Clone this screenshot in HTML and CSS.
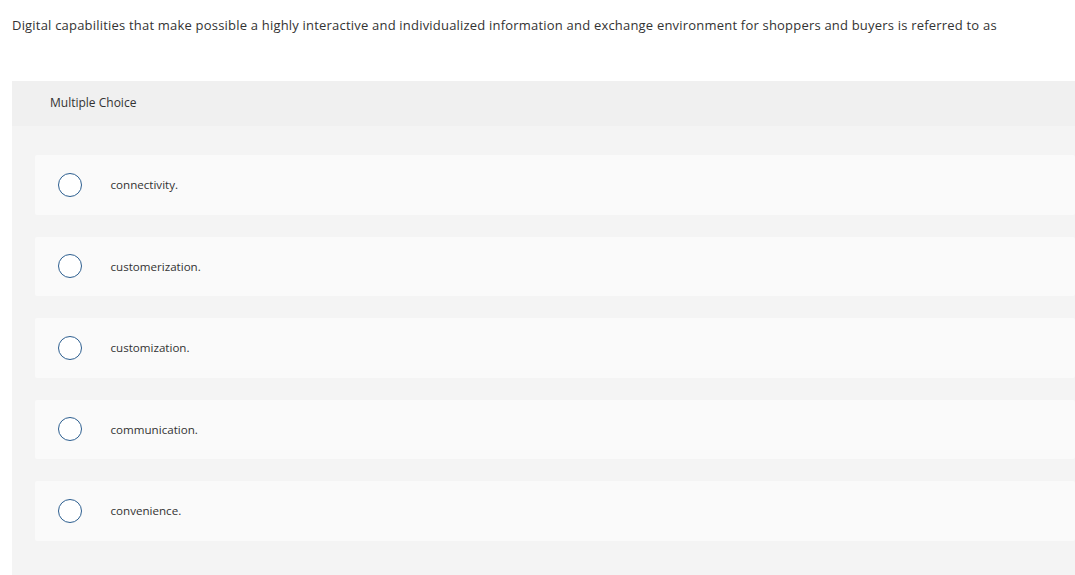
FILE: index.html
```html
<!DOCTYPE html>
<html>
<head>
<meta charset="utf-8">
<link rel="stylesheet" href="styles.css">
</head>
<body>
<div class="question">Digital capabilities that make possible a highly interactive and individualized information and exchange environment for shoppers and buyers is referred to as</div>
<div class="panel">
  <div class="panel-head">Multiple Choice</div>
  <div class="choices">
    <div class="choice"><span class="radio"></span><span class="label">connectivity.</span></div>
    <div class="choice"><span class="radio"></span><span class="label">customerization.</span></div>
    <div class="choice"><span class="radio"></span><span class="label">customization.</span></div>
    <div class="choice"><span class="radio"></span><span class="label">communication.</span></div>
    <div class="choice"><span class="radio"></span><span class="label">convenience.</span></div>
  </div>
</div>
</body>
</html>
```
FILE: styles.css
```css
html, body {
  margin: 0;
  padding: 0;
  background: #ffffff;
}
body {
  font-family: "Open Sans", "Liberation Sans", sans-serif;
  color: #333333;
  width: 1075px;
  height: 575px;
  overflow: hidden;
}
.question {
  font-size: 13px;
  letter-spacing: 0.2px;
  line-height: 18px;
  padding: 16px 0 0 12px;
  height: 81px;
  box-sizing: border-box;
}
.panel {
  margin-left: 12px;
  background: #f4f4f4;
  height: 494px;
}
.panel-head {
  background: #f0f0f0;
  height: 45px;
  box-sizing: border-box;
  padding: 13px 0 0 38px;
  font-size: 12px;
  line-height: 17px;
}
.choices {
  display: flex;
  flex-direction: column;
  gap: 22px;
  padding: 29px 0 0 23px;
}
.choice {
  height: 59.5px;
  background: #fafafa;
  border-radius: 2px;
  display: flex;
  align-items: center;
}
.radio {
  width: 22px;
  height: 22px;
  border: 1.5px solid #2c5e8f;
  border-radius: 50%;
  background: #ffffff;
  margin-left: 22.5px;
  flex: none;
}
.label {
  margin-left: 29px;
  font-size: 11.6px;
  line-height: 15px;
}
```
